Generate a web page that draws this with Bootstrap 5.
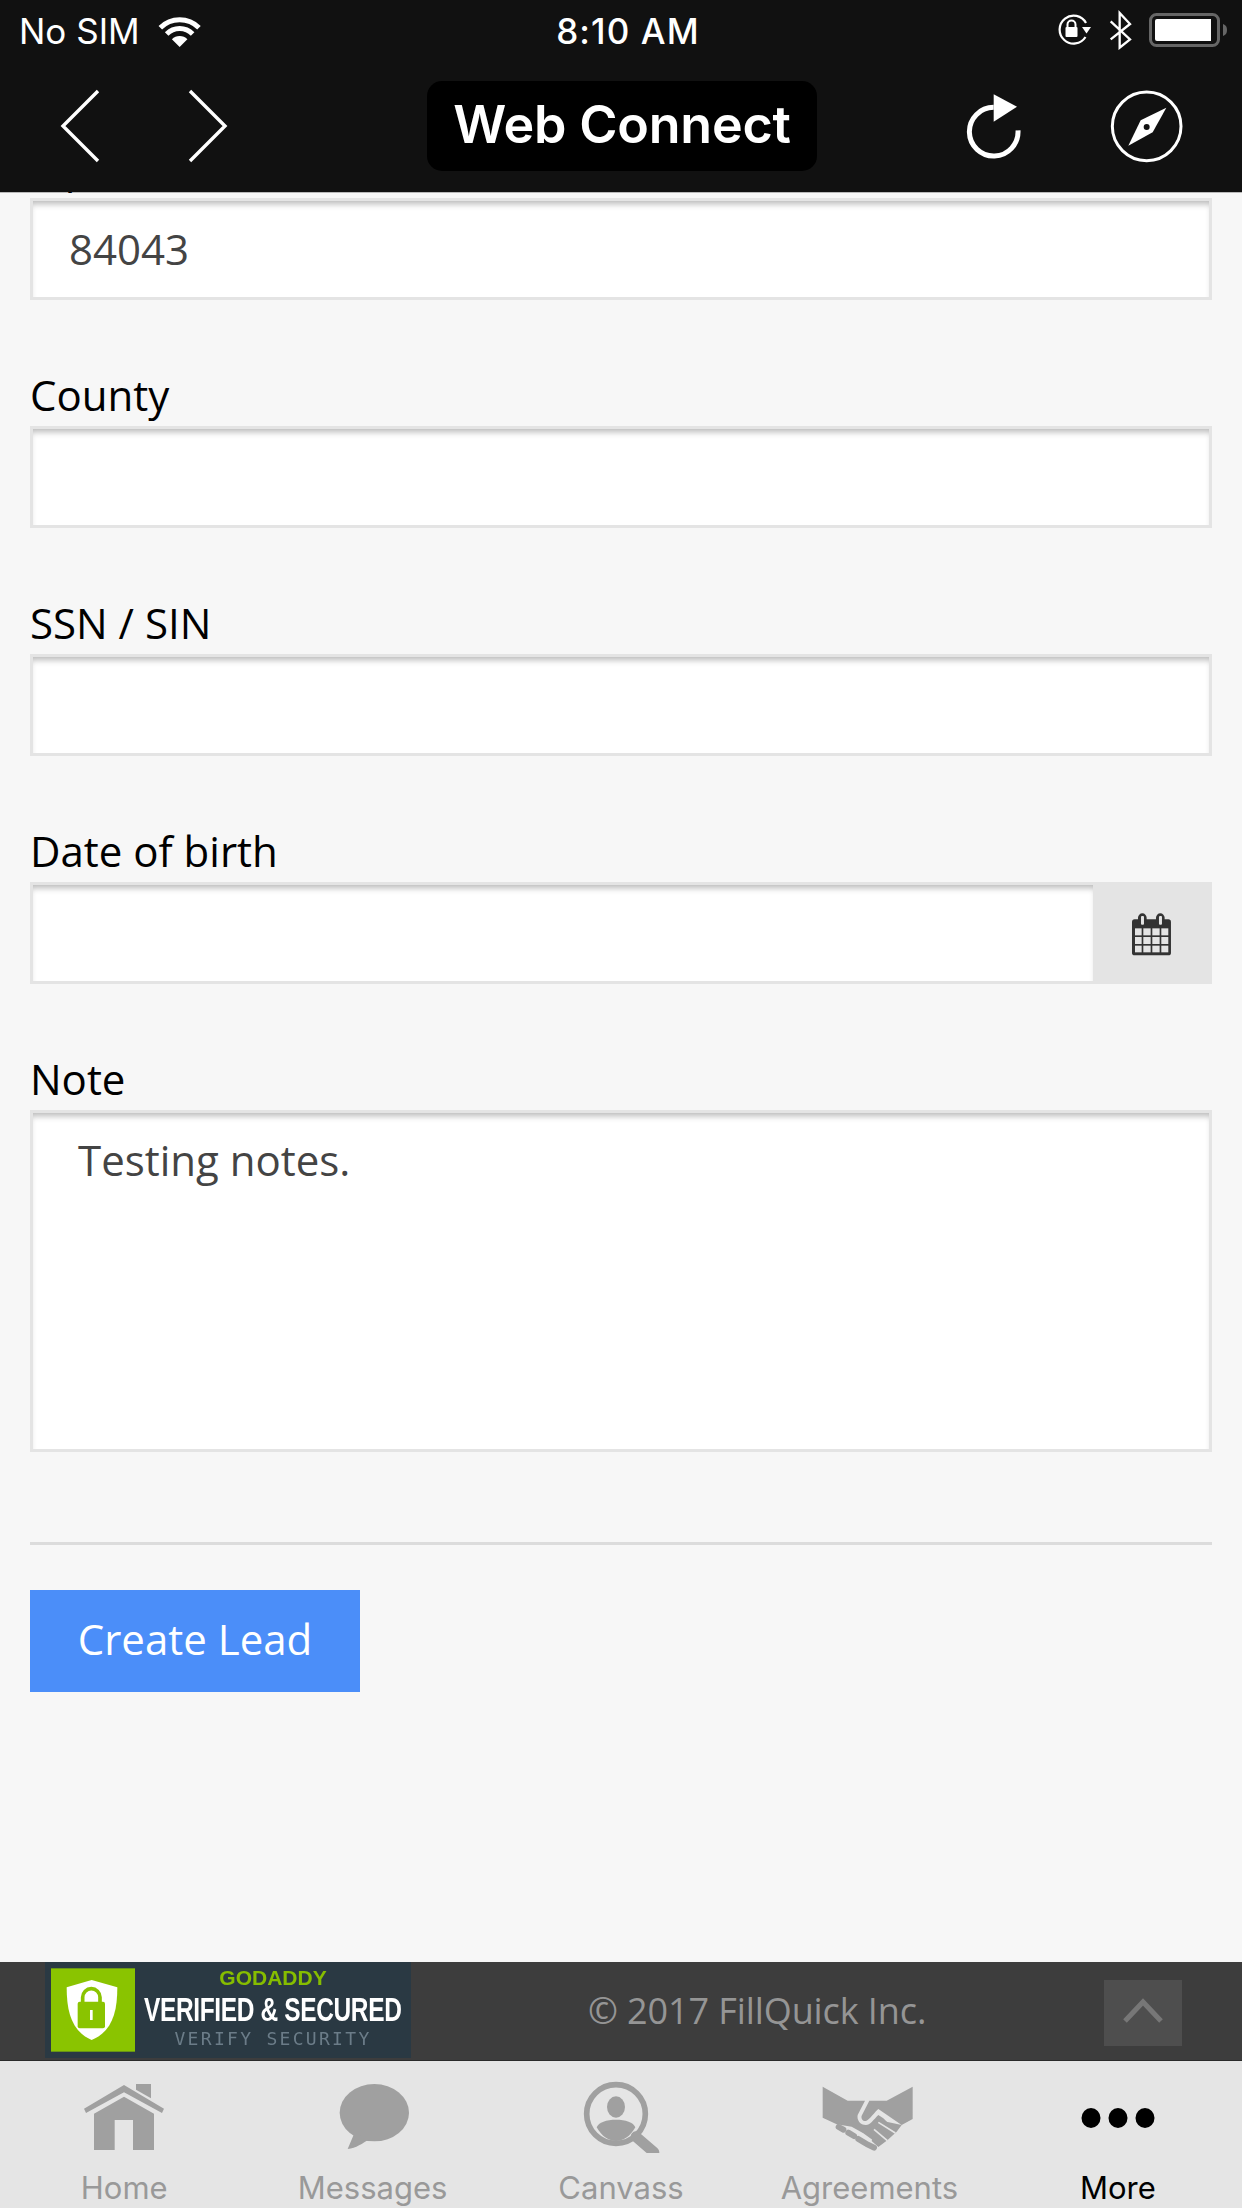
<!DOCTYPE html>
<html lang="en">
<head>
<meta charset="utf-8">
<title>Web Connect</title>
<link href="https://cdn.jsdelivr.net/npm/bootstrap@5.3.0/dist/css/bootstrap.min.css" rel="stylesheet">
<style>
html,body{margin:0;background:#f7f7f7}
.app-shell{width:1242px;height:2208px;overflow:hidden}
.top-bar{background-color:#111;background-clip:padding-box;border-bottom:1px solid rgba(0,0,0,.25);height:193px;color:#fff;font-family:Inter,"Liberation Sans",sans-serif;position:relative;z-index:5;flex:none}
.status-row{height:60px;padding:0 15px 0 19px;font-size:35px;line-height:1}
.status-side{flex:1 1 0}
.status-time{font-weight:500;font-size:35px;letter-spacing:1.1px;padding-left:10px;padding-top:2px}
.status-carrier{padding-top:2px}
.tool-row{padding:21px 58px 21px 60px}
.tool-side{flex:1 1 0}
.gap-nav{gap:88px}
.gap-tool{gap:88px}
.gap-status{gap:16px}
.title-pill{width:390px;height:90px;background:#000;border-radius:15px;font-size:52px;font-weight:600;letter-spacing:-.2px;padding-bottom:2px}
.form-area{flex:1 1 0;margin-top:-60px;padding:5px 30px 0;font-family:"Open Sans",sans-serif;min-height:0}
.field-block{height:228px}
.field-label{display:block;height:60px;margin:0;font-size:42px;line-height:58px;color:#000}
.field-input.form-control,.field-input.form-control:focus{height:102px;border:3px solid #e4e4e4;border-radius:0;background:#fff;font-size:42px;color:#444;padding:0 36px 2px;box-shadow:inset 0 6px 6px -3px rgba(0,0,0,.28)}
.field-input.note-input.form-control{height:342px;padding:18px 45px 0;resize:none;line-height:1.4}
.date-addon.input-group-text{width:120px;height:102px;justify-content:center;background:#e4e4e4;border:0;border-radius:0;padding:2px 0 0}
.date-group .field-input{border-right:0}
.note-block{height:492px}
.form-rule{height:3px;margin:0;border:0;background:#dcdcdc;opacity:1}
.create-btn.btn{width:330px;height:102px;margin-top:45px;background:#4b8ef9;border:0;border-radius:0;color:#fff;font-size:42px;font-weight:400;padding:0 0 5px}
.foot-band{height:99px;background:#3d3d3d;border-bottom:1px solid #2a2a2a;flex:none;padding-left:45px;padding-right:60px;font-family:"Open Sans",sans-serif}
.seal{width:366px;height:96px;background:#2a3943;margin-bottom:2px;padding-left:6px}
.seal-art{flex:none}
.seal-text{width:262px;flex:none;margin-left:7px;padding-bottom:4px;text-align:center;filter:blur(.5px);white-space:nowrap;font-family:"Liberation Sans",sans-serif}
.seal-top{font-size:21px;line-height:26px;height:26px;font-weight:700;color:#86bd00}
.seal-mid{font-size:34px;line-height:36px;height:36px;font-weight:700;color:#fff;transform:scaleX(.72);letter-spacing:-.5px}
.seal-low{font-size:18px;line-height:24px;height:24px;color:#6b7c88;letter-spacing:2.3px;font-family:"DejaVu Sans Mono",monospace}
.copy-text{margin-left:177px;color:#959595;font-size:36px;font-weight:400;letter-spacing:-.1px}
.up-btn{width:78px;height:66px;background:#4e4e4e;margin-top:4px;padding-bottom:6px}
.tab-strip{height:147px;background:#e5e5e5;flex:none;font-family:Inter,"Liberation Sans",sans-serif}
.tab-cell{flex:1 1 0;padding-top:17px;color:#999;font-size:31px;line-height:36px;text-decoration:none}
.tab-cell.is-current{color:#000}
.tab-art{height:75px;margin-bottom:17px}
</style>
</head>
<body>
<div class="app-shell d-flex flex-column">
  <header class="top-bar d-flex flex-column">
    <div class="status-row d-flex align-items-center">
      <div class="status-side d-flex align-items-center">
        <span class="status-carrier">No SIM</span>
        <svg class="ms-3" width="47.3" height="35" viewBox="460 35 142 105" fill="none" stroke="#fff" stroke-width="15"><path d="M473 79A82 82 0 0 1 589 79"/><path d="M492 98A55 55 0 0 1 570 98"/><path d="M531 137L507.7 113.7A33 33 0 0 1 554.3 113.7Z" fill="#fff" stroke="none"/></svg>
      </div>
      <div class="status-time">8:10 AM</div>
      <div class="status-side d-flex align-items-center justify-content-end gap-status">
        <svg width="36" height="32" viewBox="0 0 36 32"><path d="M30 9A14 14 0 1 0 29.5 23" fill="none" stroke="#fff" stroke-width="2.2"/><path d="M26 13H35L30.5 19.5Z" fill="#fff"/><rect x="9.5" y="13" width="12" height="10" rx="1" fill="#fff"/><path d="M11.5 13V10.5A4 4 0 0 1 19.5 10.5V13" fill="none" stroke="#fff" stroke-width="2"/></svg>
        <svg width="25" height="40" viewBox="505 30 75 120" fill="none" stroke="#fff" stroke-width="7"><path d="M513 64L571 118 540 143V39L571 72 513 118"/></svg>
        <svg width="78" height="34" viewBox="0 0 78 34"><rect x="1.5" y="1.5" width="68" height="31" rx="6" fill="none" stroke="#666" stroke-width="3"/><path d="M8 6H62V28H8A2 2 0 0 1 6 26V8A2 2 0 0 1 8 6Z" fill="#fff"/><path d="M74 11C77 12 78 14 78 17S77 22 74 23Z" fill="#666"/></svg>
      </div>
    </div>
    <div class="tool-row d-flex align-items-center">
      <div class="tool-side d-flex align-items-center gap-nav">
        <svg width="40" height="74" viewBox="0 0 40 74" fill="none" stroke="#fff" stroke-width="3.4"><path d="M38 2L3 37 38 72"/></svg>
        <svg width="40" height="74" viewBox="0 0 40 74" fill="none" stroke="#fff" stroke-width="3.4"><path d="M2 2L37 37 2 72"/></svg>
      </div>
      <div class="title-pill d-flex align-items-center justify-content-center">Web Connect</div>
      <div class="tool-side d-flex align-items-center justify-content-end gap-tool">
        <svg width="56.7" height="70" viewBox="70 270 170 210"><path d="M232 388A73 73 0 1 1 159 319" fill="none" stroke="#fff" stroke-width="15"/><path d="M159 280L229 317 159 362Z" fill="#fff"/></svg>
        <svg width="75" height="76.7" viewBox="505 260 225 230"><circle cx="618" cy="375" r="103" fill="none" stroke="#fff" stroke-width="9"/><path d="M677 319L636 393 563 433 600 357Z" fill="#fff"/><circle cx="618" cy="377" r="9" fill="#111"/></svg>
      </div>
    </div>
  </header>

  <main class="form-area">
    <form>
      <div class="field-block"><label class="field-label form-label">Zip</label><input class="field-input form-control" type="text" value="84043"></div>
      <div class="field-block"><label class="field-label form-label">County</label><input class="field-input form-control" type="text"></div>
      <div class="field-block"><label class="field-label form-label">SSN / SIN</label><input class="field-input form-control" type="text"></div>
      <div class="field-block"><label class="field-label form-label">Date of birth</label>
        <div class="input-group date-group flex-nowrap"><input class="field-input form-control" type="text">
          <span class="date-addon input-group-text"><svg width="43.3" height="44.7" viewBox="690 158 130 134"><rect x="696" y="180" width="117" height="108" rx="8" fill="#333"/><rect x="714" y="162" width="26" height="40" rx="13" fill="#333"/><rect x="768" y="162" width="26" height="40" rx="13" fill="#333"/><rect x="723" y="170" width="9" height="26" rx="3" fill="#e4e4e4"/><rect x="777" y="170" width="9" height="26" rx="3" fill="#e4e4e4"/><g fill="#e4e4e4"><rect x="705" y="207" width="20" height="21"/><rect x="730" y="207" width="22" height="21"/><rect x="757" y="207" width="22" height="21"/><rect x="784" y="207" width="21" height="21"/><rect x="705" y="233" width="20" height="21"/><rect x="730" y="233" width="22" height="21"/><rect x="757" y="233" width="22" height="21"/><rect x="784" y="233" width="21" height="21"/><rect x="705" y="259" width="20" height="20"/><rect x="730" y="259" width="22" height="20"/><rect x="757" y="259" width="22" height="20"/><rect x="784" y="259" width="21" height="20"/></g></svg></span>
        </div>
      </div>
      <div class="field-block note-block"><label class="field-label form-label">Note</label><textarea class="field-input note-input form-control">Testing notes.</textarea></div>
      <hr class="form-rule">
      <button type="button" class="create-btn btn">Create Lead</button>
    </form>
  </main>

  <footer class="foot-band d-flex align-items-center">
    <div class="seal d-flex align-items-center">
      <svg class="seal-art" width="84" height="84" viewBox="33 25 252 250"><rect x="33" y="25" width="252" height="250" fill="#8ac400"/><path d="M80 82L155 60 232 82C232 160 215 215 155 240 97 215 80 160 80 82Z" fill="#fff"/><rect x="113" y="125" width="82" height="80" rx="6" fill="#8ac400"/><path d="M128 128V112A26 26 0 0 1 180 112V128" fill="none" stroke="#8ac400" stroke-width="11"/><rect x="150" y="150" width="8" height="30" fill="#fff"/></svg>
      <div class="seal-text d-flex flex-column align-items-center">
        <div class="seal-top">GODADDY</div>
        <div class="seal-mid">VERIFIED &amp; SECURED</div>
        <div class="seal-low">VERIFY SECURITY</div>
      </div>
    </div>
    <div class="copy-text">© 2017 FillQuick Inc.</div>
    <div class="up-btn ms-auto d-flex align-items-center justify-content-center"><svg width="44" height="26" viewBox="0 0 44 26" fill="none" stroke="#777" stroke-width="5"><path d="M4 24L22 5 40 24"/></svg></div>
  </footer>

  <nav class="tab-strip d-flex">
    <a class="tab-cell d-flex flex-column align-items-center" href="#">
      <svg class="tab-art" width="80" height="75" viewBox="72 39 240 225" fill="#a0a0a0"><path d="M228 57H273V100L228 74Z"/><path d="M72 131L192 60 312 131 306 144 192 82 78 144Z"/><path d="M102 146L192 95 282 146V255H219V165H164V255H102Z"/></svg>
      <span>Home</span>
    </a>
    <a class="tab-cell d-flex flex-column align-items-center" href="#">
      <svg class="tab-art" width="80" height="75" viewBox="816 39 240 225" fill="#a0a0a0"><ellipse cx="940" cy="143" rx="104" ry="86"/><path d="M880 205L860 252C885 250 905 235 925 222Z"/></svg>
      <span>Messages</span>
    </a>
    <a class="tab-cell d-flex flex-column align-items-center" href="#">
      <svg class="tab-art" width="80" height="75" viewBox="93 39 240 225" fill="#a0a0a0"><circle cx="198" cy="147" r="88" fill="none" stroke="#a0a0a0" stroke-width="17"/><ellipse cx="198" cy="126" rx="27" ry="32"/><path d="M140 187C145 172 170 164 198 164S251 172 256 187C240 215 220 228 198 228S156 215 140 187Z"/><path d="M258 215L312 262" stroke="#a0a0a0" stroke-width="32" stroke-linecap="round"/></svg>
      <span>Canvass</span>
    </a>
    <a class="tab-cell d-flex flex-column align-items-center" href="#">
      <svg class="tab-art" width="100" height="75" viewBox="807 39 300 225" fill="#a0a0a0"><path d="M818 65L893 107H945L923 150C920 165 930 180 948 180 960 180 970 165 985 150L1000 160 1018 178 968 225 940 205 905 185 860 178 818 158Z"/><path d="M1088 65L1010 107H958L935 152C932 162 940 170 948 168 958 165 975 140 985 132L1055 180 1040 200 1012 226 985 246 965 228 985 165 1055 180 1088 162Z"/><path d="M985 172L1036 204M972 193L1012 227" fill="none" stroke="#e5e5e5" stroke-width="5"/><g stroke="#a0a0a0" stroke-width="18" stroke-linecap="round"><path d="M866 186L880 194"/><path d="M895 203L912 213"/><path d="M925 222L945 234"/><path d="M952 238L972 248"/></g></svg>
      <span>Agreements</span>
    </a>
    <a class="tab-cell is-current d-flex flex-column align-items-center" href="#">
      <svg class="tab-art" width="80" height="75" viewBox="0 0 80 75" fill="#000"><ellipse cx="13" cy="40" rx="9.5" ry="10"/><ellipse cx="40" cy="40" rx="9.5" ry="10"/><ellipse cx="67" cy="40" rx="9.5" ry="10"/></svg>
      <span>More</span>
    </a>
  </nav>
</div>
<script src="https://cdn.jsdelivr.net/npm/bootstrap@5.3.0/dist/js/bootstrap.bundle.min.js"></script>
</body>
</html>
